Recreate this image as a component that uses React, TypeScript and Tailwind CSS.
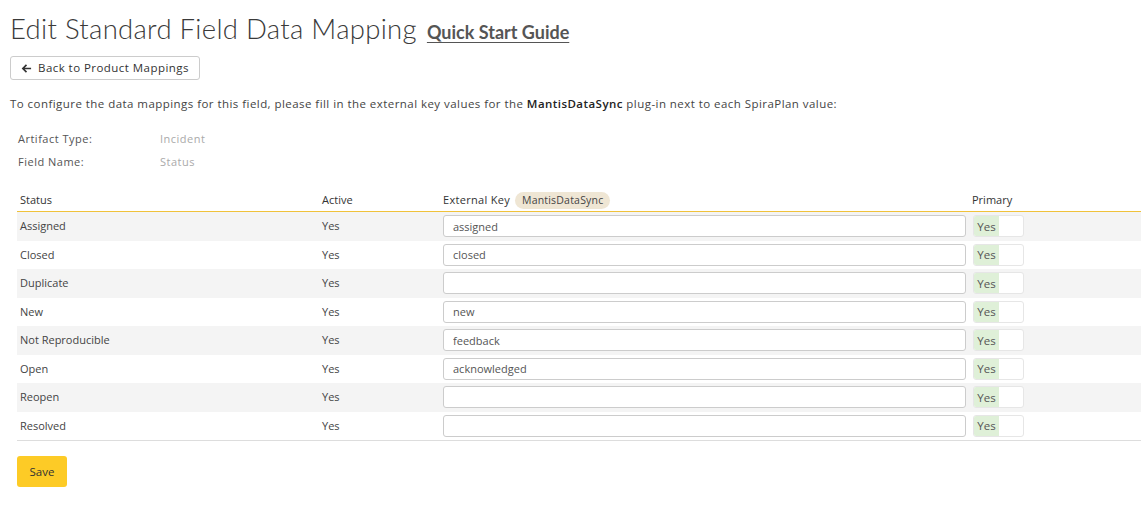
import { useState } from "react";

const rows = [
  { name: "Assigned", key: "assigned" },
  { name: "Closed", key: "closed" },
  { name: "Duplicate", key: "" },
  { name: "New", key: "new" },
  { name: "Not Reproducible", key: "feedback" },
  { name: "Open", key: "acknowledged" },
  { name: "Reopen", key: "" },
  { name: "Resolved", key: "" },
];

const font = { fontFamily: "'Open Sans', Lato, sans-serif" };

const Toggle = () => (
  <div className="flex h-[22px] w-[51px] rounded-[3px] border border-[#e6e6e6] bg-white overflow-hidden">
    <span className="flex items-center justify-center w-[25px] bg-[#dff0d8] text-[11.5px] text-[#555]">Yes</span>
  </div>
);

export default function App() {
  const [keys, setKeys] = useState(rows.map((r) => r.key));

  return (
    <div className="w-[1141px] h-[506px] bg-white text-[#444]" style={font}>
      <div className="pl-[10px] pt-[8px]">
        <h1 className="flex items-baseline gap-[10px] h-[38px]" style={{ fontFamily: "Lato, sans-serif" }}>
          <span className="text-[27.5px] font-light text-[#3a3a3a] tracking-[0.3px]">Edit Standard Field Data Mapping</span>
          <a className="text-[18px] font-bold text-[#555] underline underline-offset-[3px]">Quick Start Guide</a>
        </h1>
        <button className="mt-[10px] flex items-center gap-[6px] h-[24px] w-[190px] pl-[10px] rounded-[3px] border border-[#ccc] bg-white text-[11.5px] tracking-[0.45px] text-[#333]">
          <svg width="11" height="11" viewBox="0 0 12 12"><path d="M11 6H2.5M6 2 2 6l4 4" fill="none" stroke="#333" strokeWidth="1.8" /></svg>
          Back to Product Mappings
        </button>
        <p className="mt-[15px] text-[11.5px] leading-[18px] tracking-[0.45px] text-[#444]">
          To configure the data mappings for this field, please fill in the external key values for the <span className="font-semibold text-[#222]">MantisDataSync</span> plug-in next to each SpiraPlan value:
        </p>
        <div className="mt-[17px] pl-[8px] grid grid-cols-[142px_1fr] gap-y-[5px] text-[11px] leading-[18px] tracking-[0.5px]">
          <span className="text-[#555]">Artifact Type:</span><span className="text-[#aaa]">Incident</span>
          <span className="text-[#555]">Field Name:</span><span className="text-[#aaa]">Status</span>
        </div>
      </div>

      <div className="ml-[17px] mt-[19px] w-[1124px] text-[11px]">
        <div className="flex items-center h-[22px] border-b border-[#f0c23a] text-[#333]">
          <span className="w-[302px] pl-[3px]">Status</span>
          <span className="w-[121px] pl-[3px]">Active</span>
          <span className="w-[529px] pl-[3px] flex items-center gap-[5px] tracking-[0.3px]">
            External Key
            <span className="rounded-full bg-[#efe6d4] px-[7px] py-[1px] text-[10.5px] text-[#444] tracking-[0.2px]">MantisDataSync</span>
          </span>
          <span className="pl-[3px]">Primary</span>
        </div>
        {rows.map((r, i) => (
          <div key={r.name} className={`flex items-center h-[28.5px] ${i % 2 === 0 ? "bg-[#f4f4f4]" : "bg-white"}`}>
            <span className="w-[302px] pl-[3px]">{r.name}</span>
            <span className="w-[121px] pl-[3px]">Yes</span>
            <span className="w-[529px] pl-[3px]">
              <input
                value={keys[i]}
                onChange={(e) => setKeys(keys.map((k, j) => (j === i ? e.target.value : k)))}
                className="w-[523px] h-[22px] rounded-[3px] border border-[#ccc] bg-white px-[9px] text-[11px] text-[#555] outline-none"
              />
            </span>
            <span className="pl-[4px]"><Toggle /></span>
          </div>
        ))}
        <div className="border-t border-[#ddd]" />
        <button className="mt-[15px] h-[31px] w-[50px] rounded-[3px] bg-[#fdcb26] text-[11.5px] text-[#333]">Save</button>
      </div>
    </div>
  );
}
